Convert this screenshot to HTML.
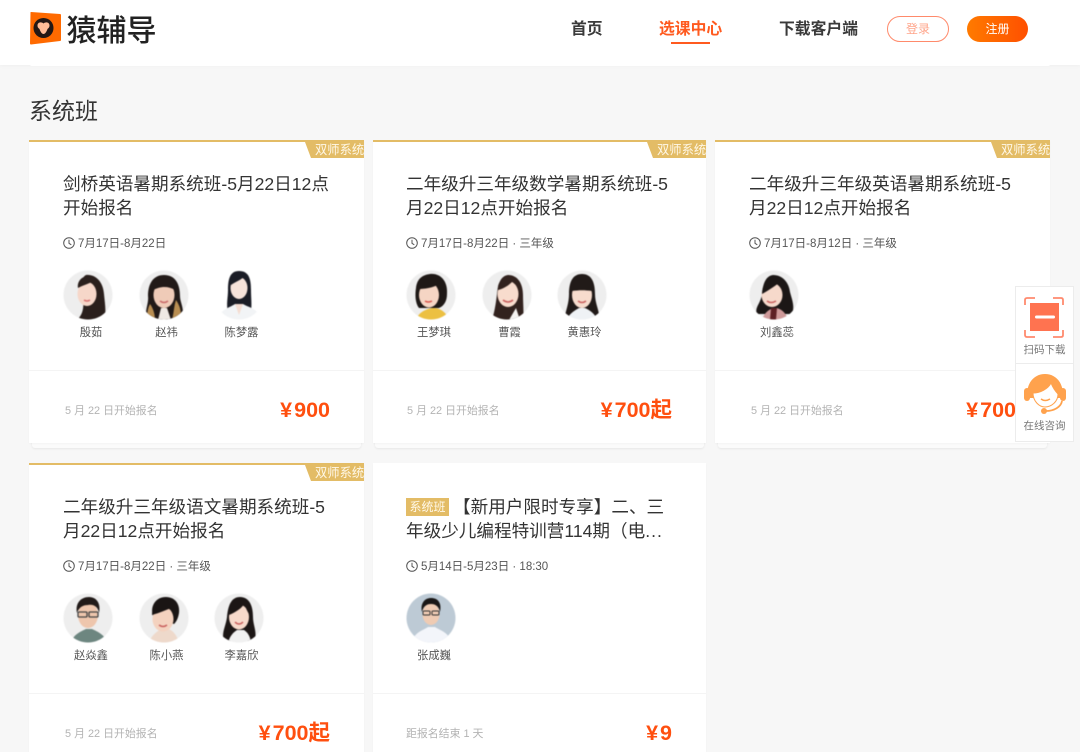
<!DOCTYPE html>
<html lang="zh"><head><meta charset="utf-8"><title>猿辅导</title>
<style>
*{box-sizing:border-box;margin:0;padding:0}
html,body{width:1080px;height:752px;overflow:hidden;background:#f7f7f7;font-family:"Liberation Sans","Noto Sans CJK SC",sans-serif;color:#333}
.abs,.card,.under,.hd{position:absolute}
.hd{left:0;top:0;width:1080px;height:65px;background:#fff;box-shadow:0 1px 4px rgba(0,0,0,.035)}
.nav{position:absolute;top:20px;font-size:15.8px;line-height:20px;font-weight:700;color:#3a3a3a;white-space:nowrap}
.under{width:329px;height:9px;background:#fbfbfb;border-radius:0 0 3px 3px;box-shadow:0 1px 2px rgba(0,0,0,.07)}
.card{width:335px;background:#fff;box-shadow:0 1px 2px rgba(0,0,0,.03);overflow:hidden}
.bar{position:absolute;left:0;top:0;width:100%;height:2px;background:#e3bc66}
.tag{position:absolute;right:0;top:2px;width:59px;height:16px;background:#e3bc66;clip-path:polygon(0 0,100% 0,100% 100%,6px 100%);color:#fff8e8;font-size:12.3px;line-height:16px;padding-left:10px;white-space:nowrap;overflow:hidden}
.t{position:absolute;left:34px;top:32px;width:272px;font-size:17.6px;line-height:24px;color:#333;height:48px;overflow:hidden}
.b{display:inline-block;width:43px;height:18px;background:#e3bc66;color:#fff8e8;font-size:12px;line-height:18px;text-align:center;vertical-align:2px;margin-right:4px}
.d{position:absolute;left:49px;top:96px;font-size:11.5px;line-height:16px;color:#555;white-space:nowrap}
.c{position:absolute;left:34px;top:97px}
.av{position:absolute;top:130px;width:50px;height:50px;filter:blur(.4px)}
.n{position:absolute;top:184px;width:76px;text-align:center;font-size:11.3px;line-height:18px;color:#555}
.l{position:absolute;left:0;top:230px;width:100%;height:1px;background:#f4f4f4}
.s{position:absolute;left:36px;top:263px;font-size:10.9px;line-height:16px;color:#b3b3b3;white-space:nowrap}
.p{position:absolute;right:34px;top:256px;font-size:21.5px;line-height:28px;font-weight:700;color:#ff4f0f;white-space:nowrap}
.p i{font-style:normal;letter-spacing:2px}
.side{position:absolute;left:1015px;width:59px;background:#fff;border:1px solid #ececec}
.side span{position:absolute;left:0;width:57px;text-align:center;font-size:10.5px;line-height:14px;color:#777;white-space:nowrap}
</style></head><body>

<svg width="0" height="0" style="position:absolute"><defs>
<clipPath id="cp"><circle cx="25" cy="25" r="24.5"/></clipPath>
</defs></svg>

<div class="hd"></div>
<div class="abs" style="left:30px;top:64px;width:1020px;height:2px;background:#fff;border-radius:0 0 4px 4px"></div>
<svg class="abs" style="left:29px;top:11px" width="33" height="35" viewBox="0 0 33 35">
<path d="M1.500 1.500Q1.500 1 2 1L31 3Q32 3 32 4V29Q32 30 31 30L2 33.500Q1 33.500 1 32.500Z" fill="#ff6a00"/>
<circle cx="14.500" cy="17" r="10" fill="#231815"/>
<path d="M14.500 12.500C12.500 10.500 8.500 11 8.500 14.500 8.500 16.500 9.500 17 10.500 18 11.500 21 13 23 14.500 23 16 23 17.500 21 18.500 18 19.500 17 20.500 16.500 20.500 14.500 20.500 11 16.500 10.500 14.500 12.500Z" fill="#ffbd98"/>
</svg>
<div class="abs" style="left:66.500px;top:6px;font-size:30px;line-height:44px;font-weight:500;color:#222;white-space:nowrap;font-family:'Noto Sans CJK SC',sans-serif">猿辅导</div>

<div class="nav" style="left:571px">首页</div>
<div class="nav" style="left:659px;color:#ff5a1f">选课中心</div>
<div class="abs" style="left:671px;top:42px;width:39px;height:2px;background:#ff5a1f"></div>
<div class="nav" style="left:779px;width:80px">下载客户端</div>
<div class="abs" style="left:887px;top:16px;width:62px;height:26px;border:1px solid #ff8a6b;border-radius:13px;color:#ffa48a;font-size:12px;line-height:24px;text-align:center">登录</div>
<div class="abs" style="left:967px;top:16px;width:61px;height:26px;border-radius:13px;background:linear-gradient(90deg,#ff7a00,#ff5000);color:#fff;font-size:12px;line-height:26px;text-align:center">注册</div>

<div class="abs" style="left:29px;top:96px;font-size:23px;line-height:31px;color:#333">系统班</div>

<div class="under" style="left:32px;top:439px"></div>
<div class="under" style="left:375px;top:439px"></div>
<div class="under" style="left:718px;top:439px"></div>

<!-- card 1 -->
<div class="card" style="left:29px;top:140px;height:303px">
<div class="bar"></div><div class="tag">双师系统</div>
<div class="t">剑桥英语暑期系统班-5月22日12点开始报名</div>
<svg class="c" width="12" height="12" viewBox="0 0 12 12" fill="none" stroke="#555"><circle cx="6" cy="6" r="5.300"/><path d="M6 2.800V6.300L8.300 7.800"/></svg>
<div class="d">7月17日-8月22日</div>
<svg class="av" style="left:34px" viewBox="0 0 50 50"><g clip-path="url(#cp)"><rect width="50" height="50" fill="#eee"/><path d="M23 5C32 4 40 11 41 24 42 35 44 44 40 50H14C20 44 21 38 20 28 17 20 17 8 23 5Z" fill="#2a1f1c"/><ellipse cx="24" cy="24" rx="9.500" ry="12" fill="#f6d7c9"/><path d="M15 18C20 15 27 14 33 9L24 6C18 7 14 12 15 18Z" fill="#2a1f1c"/><path d="M21 30Q24 32 27 30" stroke="#d97070" stroke-width="1.500" fill="none"/></g></svg>
<div class="n" style="left:24px">殷茹</div>
<svg class="av" style="left:109.500px" viewBox="0 0 50 50"><g clip-path="url(#cp)"><rect width="50" height="50" fill="#eee"/><path d="M25 5C37 5 41 15 41 26 41 33 46 38 43 50H8C5 40 10 34 9 26 9 14 14 5 25 5Z" fill="#221a18"/><path d="M37 30C41 36 43 42 41 50H33C35 42 35 36 37 30ZM11 34C8 40 8 45 9 50H16C16 44 14 38 11 34Z" fill="#b98e52"/><ellipse cx="25" cy="25" rx="10.500" ry="13" fill="#efcbb8"/><path d="M14 20C20 17 28 15 36 20L30 9H20Z" fill="#221a18"/><path d="M19 50L22 38H28L32 50Z" fill="#efe9e4"/><path d="M21 31Q25 34 29 31" stroke="#c96a6a" stroke-width="1.500" fill="none"/></g></svg>
<div class="n" style="left:99.500px">赵祎</div>
<svg class="av" style="left:184.500px" viewBox="0 0 50 50"><g clip-path="url(#cp)"><rect width="50" height="50" fill="#fff"/><path d="M25 1C35 1 37 9 37 20 37 28 38 34 37 42H14C12 34 14 28 14 20 14 9 16 1 25 1Z" fill="#1b1d26"/><ellipse cx="25" cy="18" rx="8.500" ry="11" fill="#f7e3da"/><path d="M17 15C21 12 27 10 31 6L24 4C19 5 16 10 17 15Z" fill="#1b1d26"/><path d="M4 50C5 40 15 38 21 34H29C35 38 45 38 46 50Z" fill="#f2f4f6"/><path d="M21 34L25 45 29 34Z" fill="#f5ddd2"/></g></svg>
<div class="n" style="left:174.500px">陈梦露</div>
<div class="l"></div><div class="s">5 月 22 日开始报名</div><div class="p"><i>¥</i>900</div>
</div>

<!-- card 2 -->
<div class="card" style="left:372.500px;top:140px;height:303px;width:333.500px">
<div class="bar"></div><div class="tag">双师系统</div>
<div class="t" style="left:33.500px">二年级升三年级数学暑期系统班-5月22日12点开始报名</div>
<svg class="c" style="left:33.500px" width="12" height="12" viewBox="0 0 12 12" fill="none" stroke="#555"><circle cx="6" cy="6" r="5.300"/><path d="M6 2.800V6.300L8.300 7.800"/></svg>
<div class="d" style="left:48.500px">7月17日-8月22日 · 三年级</div>
<svg class="av" style="left:33.500px" viewBox="0 0 50 50"><g clip-path="url(#cp)"><rect width="50" height="50" fill="#eee"/><path d="M24 4C36 3 42 13 41 24 41 31 38 36 33 38H13C9 33 9 24 10 18 11 9 16 5 24 4Z" fill="#1e1816"/><ellipse cx="23" cy="25" rx="10" ry="12.500" fill="#f5d5c4"/><path d="M12 19C18 19 27 18 33 14L28 7H17Z" fill="#1e1816"/><path d="M10 50C12 42 22 38 28 38 35 38 42 44 42 50Z" fill="#ecc042"/><path d="M19 31Q22 33 26 31" stroke="#d8574f" stroke-width="1.500" fill="none"/></g></svg>
<div class="n" style="left:23.500px">王梦琪</div>
<svg class="av" style="left:109px" viewBox="0 0 50 50"><g clip-path="url(#cp)"><rect width="50" height="50" fill="#eee"/><path d="M26 5C36 5 41 14 41 25 41 33 42 42 41 50H10C13 40 14 32 15 24 16 13 19 6 26 5Z" fill="#32221e"/><ellipse cx="26" cy="24" rx="10.500" ry="13" fill="#f8dccd"/><path d="M16 20C24 18 30 13 33 8L24 7C19 9 15 14 16 20Z" fill="#32221e"/><path d="M27 50L34 38 38 50Z" fill="#f4f2f0"/><path d="M21 30Q26 34 31 30" stroke="#c9605e" stroke-width="1.500" fill="none"/></g></svg>
<div class="n" style="left:99px">曹霞</div>
<svg class="av" style="left:184px" viewBox="0 0 50 50"><g clip-path="url(#cp)"><rect width="50" height="50" fill="#eee"/><path d="M25 4C35 4 38 13 38 24 38 33 42 40 42 46H8C9 40 12 33 12 24 12 13 15 4 25 4Z" fill="#211a18"/><ellipse cx="25" cy="25" rx="10" ry="13" fill="#f7dccd"/><path d="M15 21C22 20 28 20 35 21L32 10H18Z" fill="#211a18"/><path d="M10 50C12 43 19 40 22 38H28C32 40 38 43 40 50Z" fill="#eff2f5"/><path d="M21 31Q25 34 29 31" stroke="#c9605e" stroke-width="1.500" fill="none"/></g></svg>
<div class="n" style="left:174px">黄惠玲</div>
<div class="l"></div><div class="s" style="left:34.500px">5 月 22 日开始报名</div><div class="p"><i>¥</i>700起</div>
</div>

<!-- card 3 -->
<div class="card" style="left:715px;top:140px;height:303px">
<div class="bar"></div><div class="tag">双师系统</div>
<div class="t">二年级升三年级英语暑期系统班-5月22日12点开始报名</div>
<svg class="c" width="12" height="12" viewBox="0 0 12 12" fill="none" stroke="#555"><circle cx="6" cy="6" r="5.300"/><path d="M6 2.800V6.300L8.300 7.800"/></svg>
<div class="d">7月17日-8月12日 · 三年级</div>
<svg class="av" style="left:34px" viewBox="0 0 50 50"><g clip-path="url(#cp)"><rect width="50" height="50" fill="#eee"/><path d="M24 5C34 5 40 13 41 22 43 30 46 36 43 44H8C5 38 12 33 13 24 14 13 17 6 24 5Z" fill="#1c1716"/><ellipse cx="23" cy="25" rx="10.500" ry="12" fill="#f6d9cb"/><path d="M13 24C20 20 28 15 33 10L24 7C17 9 13 16 13 24Z" fill="#1c1716"/><path d="M13 50C15 42 22 38 26 38 31 38 37 42 39 50Z" fill="#cf9a9a"/><path d="M22 38L28 38 27 50H21Z" fill="#5e2024"/><path d="M18 31Q22 34 27 31" stroke="#c9605e" stroke-width="1.500" fill="none"/></g></svg>
<div class="n" style="left:24px">刘鑫蕊</div>
<div class="l"></div><div class="s">5 月 22 日开始报名</div><div class="p"><i>¥</i>700</div>
</div>

<!-- card 4 -->
<div class="card" style="left:29px;top:463px;height:289px">
<div class="bar"></div><div class="tag">双师系统</div>
<div class="t">二年级升三年级语文暑期系统班-5月22日12点开始报名</div>
<svg class="c" width="12" height="12" viewBox="0 0 12 12" fill="none" stroke="#555"><circle cx="6" cy="6" r="5.300"/><path d="M6 2.800V6.300L8.300 7.800"/></svg>
<div class="d">7月17日-8月22日 · 三年级</div>
<svg class="av" style="left:34px" viewBox="0 0 50 50"><g clip-path="url(#cp)"><rect width="50" height="50" fill="#eee"/><path d="M8 50C10 41 19 38 23 36H29C33 38 42 41 44 50Z" fill="#6d8680"/><ellipse cx="25" cy="22" rx="10" ry="13" fill="#eec6ad"/><path d="M14 20C12 10 18 4 26 4 34 4 38 11 36 20 35 14 31 11 25 12 20 12 16 14 14 20Z" fill="#211a18"/><rect x="15" y="19" width="9" height="5" rx="1" fill="none" stroke="#444" stroke-width="1.300"/><rect x="26" y="19" width="9" height="5" rx="1" fill="none" stroke="#444" stroke-width="1.300"/></g></svg>
<div class="n" style="left:24px">赵焱鑫</div>
<svg class="av" style="left:109.500px" viewBox="0 0 50 50"><g clip-path="url(#cp)"><rect width="50" height="50" fill="#eee"/><path d="M10 50C12 42 19 38 22 36H30C34 38 38 42 40 50Z" fill="#eed9cb"/><path d="M27 4C36 4 41 11 40 20 39 26 37 29 35 31L15 25C10 16 15 4 27 4Z" fill="#1a1514"/><ellipse cx="24" cy="26" rx="10.500" ry="12.500" fill="#f4d2bf"/><path d="M13 22C20 20 30 16 34 14L26 8C18 8 13 15 13 22Z" fill="#1a1514"/><path d="M20 32Q24 35 28 32" stroke="#c9605e" stroke-width="1.500" fill="none"/></g></svg>
<div class="n" style="left:99.500px">陈小燕</div>
<svg class="av" style="left:184.500px" viewBox="0 0 50 50"><g clip-path="url(#cp)"><rect width="50" height="50" fill="#eee"/><path d="M26 4C36 4 39 14 39 24 39 33 44 40 40 48H10C7 40 12 33 13 24 14 13 17 4 26 4Z" fill="#1c1615"/><ellipse cx="25" cy="24" rx="10" ry="12.500" fill="#f7dacb"/><path d="M15 22C22 19 28 15 30 11 32 15 33 18 35 21L33 9H18Z" fill="#1c1615"/><path d="M14 50C16 42 20 39 23 37H30C33 39 36 42 37 50Z" fill="#f1f1f1"/><path d="M21 29Q25 33 29 29" stroke="#c9605e" stroke-width="1.500" fill="none"/></g></svg>
<div class="n" style="left:174.500px">李嘉欣</div>
<div class="l"></div><div class="s">5 月 22 日开始报名</div><div class="p"><i>¥</i>700起</div>
</div>

<!-- card 5 -->
<div class="card" style="left:372.500px;top:463px;height:289px;width:333.500px">
<div class="t" style="left:33.500px"><span class="b">系统班</span>【新用户限时专享】二、三年级少儿编程特训营114期（电<span style="letter-spacing:1px">...</span></div>
<svg class="c" style="left:33.500px" width="12" height="12" viewBox="0 0 12 12" fill="none" stroke="#555"><circle cx="6" cy="6" r="5.300"/><path d="M6 2.800V6.300L8.300 7.800"/></svg>
<div class="d" style="left:48.500px">5月14日-5月23日 · 18:30</div>
<svg class="av" style="left:33.500px" viewBox="0 0 50 50"><g clip-path="url(#cp)"><rect width="50" height="50" fill="#bdcad5"/><path d="M5 50C8 39 18 37 22 34H29C33 37 43 39 46 50Z" fill="#f3f5fa"/><ellipse cx="25" cy="21" rx="8.500" ry="11" fill="#efcbb3"/><path d="M16 19C14 10 19 5 25 5 32 5 36 10 34 19 33 14 30 11 25 11 20 11 17 14 16 19Z" fill="#1a1716"/><rect x="17" y="18" width="7" height="4" rx="1" fill="none" stroke="#333"/><rect x="26" y="18" width="7" height="4" rx="1" fill="none" stroke="#333"/></g></svg>
<div class="n" style="left:23.500px">张成巍</div>
<div class="l"></div><div class="s" style="left:33.500px">距报名结束 1 天</div><div class="p"><i>¥</i>9</div>
</div>

<!-- side -->
<div class="side" style="top:286px;height:78px">
<svg class="abs" style="left:8px;top:10px" width="40" height="42" viewBox="0 0 40 42" fill="none">
<path d="M1 8V3Q1 1 3 1H11M29 1H37Q39 1 39 3V8M39 33V38Q39 40 37 40H29M11 40H3Q1 40 1 38V33" stroke="#ff8a6e" stroke-width="1.800"/>
<rect x="6" y="6" width="29" height="28" fill="#ff7350"/><rect x="11" y="18.500" width="20" height="3" rx="1.500" fill="#fff"/>
</svg>
<span style="top:56px">扫码下载</span>
</div>
<div class="side" style="top:363px;height:79px">
<svg class="abs" style="left:8px;top:9px" width="42" height="42" viewBox="0 0 42 42" fill="none">
<path d="M3 25C2 10 10 1 21 1 32 1 40 10 39 25Z" fill="#ffa24d"/>
<rect x="0" y="15" width="6" height="13" rx="3" fill="#ffa24d"/><rect x="36" y="15" width="6" height="13" rx="3" fill="#ffa24d"/>
<path d="M9 20C16 20 24 16 27 10 29 15 32 19 34 21 34 29 27 34 21 34 15 34 9 28 9 20Z" fill="#fff" stroke="#ffa24d" stroke-width="1"/>
<path d="M17 26Q21 29 26 26" stroke="#ffa24d" stroke-width="1.500"/>
<path d="M38 28C37 34 30 38 22 38" stroke="#ffa24d" stroke-width="1.800"/>
<circle cx="20" cy="38" r="3" fill="#ffa24d"/>
</svg>
<span style="top:55px">在线咨询</span>
</div>
</body></html>
